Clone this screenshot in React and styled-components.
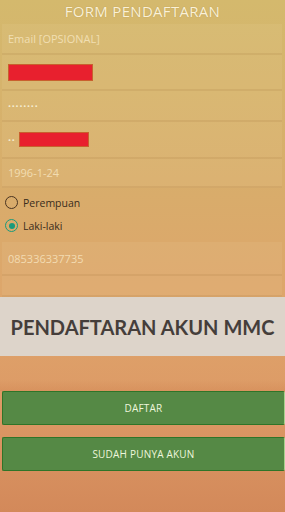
import React from "react";
import styled, { createGlobalStyle } from "styled-components";

const GlobalStyle = createGlobalStyle`
  html, body { margin: 0; padding: 0; }
  *, *::before, *::after { box-sizing: border-box; }
  body {
    width: 285px;
    height: 512px;
    overflow: hidden;
    background: linear-gradient(180deg, #d4b96d 0%, #d8ad6b 35%, #dea56b 60%, #dd9a66 78%, #d3895a 100%);
    font-family: "Open Sans", "DejaVu Sans", sans-serif;
  }
`;

const Page = styled.div`
  display: flex;
  flex-direction: column;
  width: 285px;
  height: 512px;
`;

const Title = styled.div`
  height: 22px;
  display: flex;
  align-items: center;
  justify-content: center;
  color: #fbf1d6;
  font-size: 15px;
  line-height: 18px;
  letter-spacing: 0.3px;
  text-shadow: 0 0 1px rgba(120, 90, 30, 0.4);
`;

const Field = styled.div`
  height: ${(p) => p.h}px;
  margin: ${(p) => p.mt || 0}px 3px 0 2px;
  display: flex;
  align-items: center;
  padding-left: 6px;
  gap: 3px;
  background: rgba(255, 240, 200, 0.08);
  border-bottom: 2px solid rgba(150, 100, 40, 0.12);
  color: #f2e2b8;
  font-size: 11px;
`;

const Hint = styled.span`
  color: rgba(250, 235, 200, 0.75);
`;

const Redact = styled.span`
  display: inline-block;
  width: ${(p) => p.w}px;
  height: ${(p) => p.hh}px;
  background: #e8202e;
  border: 1px solid #c9602e;
`;

const Dots = styled.span`
  font-size: 8px;
  letter-spacing: 0.8px;
  color: #f5ecd0;
`;

const RadioGroup = styled.div`
  height: 54px;
  display: flex;
  flex-direction: column;
  gap: 10px;
  padding: 8px 0 0 5px;
`;

const RadioRow = styled.label`
  display: flex;
  align-items: center;
  gap: 5px;
  height: 13px;
  color: #3a2c1c;
  font-size: 10.5px;
`;

const Circle = styled.span`
  width: 13px;
  height: 13px;
  border-radius: 50%;
  border: 1.5px solid ${(p) => (p.on ? "#1a9a7c" : "#4a3420")};
  display: flex;
  align-items: center;
  justify-content: center;
  &::after {
    content: "";
    width: 6px;
    height: 6px;
    border-radius: 50%;
    background: ${(p) => (p.on ? "#1a9a7c" : "transparent")};
  }
`;

const Banner = styled.div`
  height: 59px;
  background: #ddd4ca;
  display: flex;
  align-items: center;
  justify-content: center;
  font-family: Lato, "Open Sans", sans-serif;
  font-weight: 700;
  font-size: 20px;
  color: #453e3b;
`;

const Spacer = styled.div`
  height: 24px;
`;

const Band = styled.div`
  height: 11px;
  background: linear-gradient(180deg, rgba(200, 120, 70, 0) 0%, rgba(200, 120, 70, 0.25) 100%);
`;

const Button = styled.button`
  height: 34px;
  margin: ${(p) => p.mt}px 0 0 2px;
  width: 283px;
  background: #558945;
  border: 1px solid #2f7428;
  border-right: 1px solid #a8d08e;
  border-radius: 2px;
  color: #eef6dc;
  font-family: "Open Sans", "DejaVu Sans", sans-serif;
  font-size: 10px;
  letter-spacing: 0.2px;
  cursor: pointer;
`;

export default function App() {
  return (
    <Page>
      <GlobalStyle />
      <Title>FORM PENDAFTARAN</Title>
      <Field h={31} mt={2}>
        <Hint>Email [OPSIONAL]</Hint>
      </Field>
      <Field h={36}>
        <Redact w={85} hh={17} />
      </Field>
      <Field h={31}>
        <Dots>••••••••</Dots>
      </Field>
      <Field h={37}>
        <Dots>••</Dots>
        <Redact w={70} hh={15} />
      </Field>
      <Field h={29}>
        <Hint>1996-1-24</Hint>
      </Field>
      <RadioGroup>
        <RadioRow>
          <Circle />
          Perempuan
        </RadioRow>
        <RadioRow>
          <Circle on />
          Laki-laki
        </RadioRow>
      </RadioGroup>
      <Field h={34}>
        <Hint>085336337735</Hint>
      </Field>
      <Field h={21} />
      <Banner>PENDAFTARAN AKUN MMC</Banner>
      <Spacer />
      <Band />
      <Button mt={0}>DAFTAR</Button>
      <Button mt={12}>SUDAH PUNYA AKUN</Button>
    </Page>
  );
}
